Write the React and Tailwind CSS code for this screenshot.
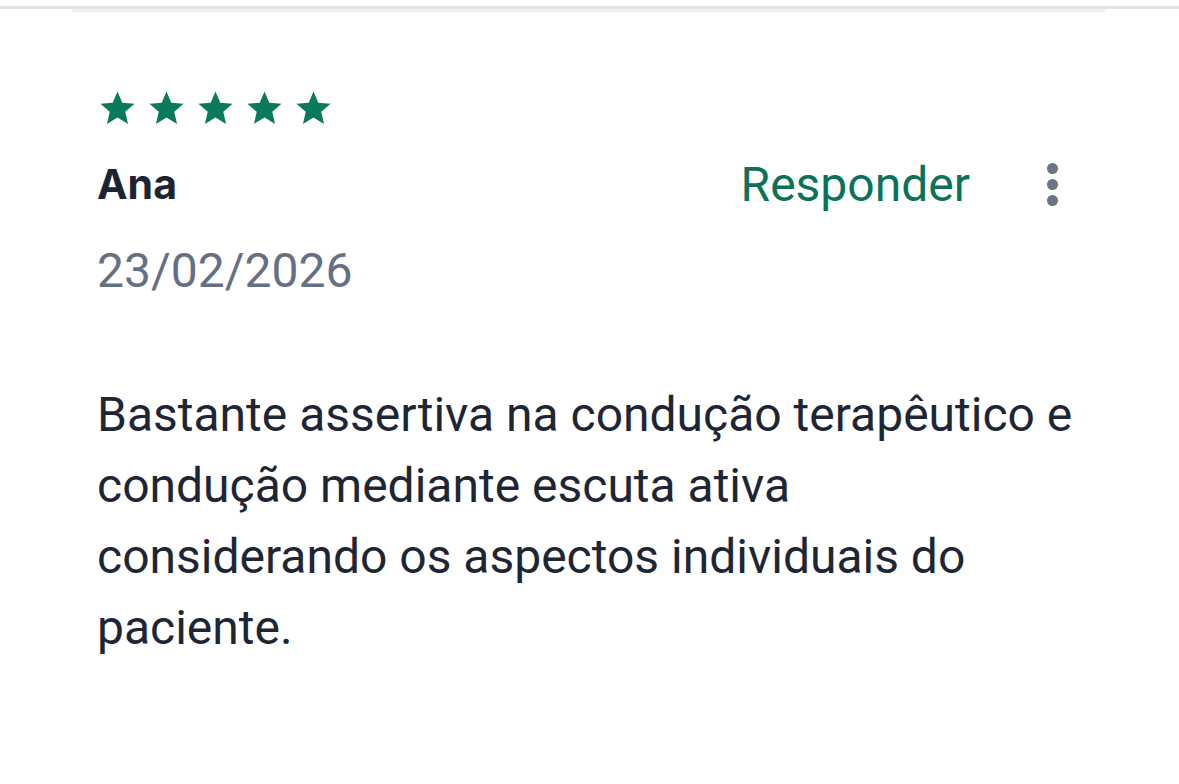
import React from "react";

const Star = () => (
  <svg width="41" height="41" viewBox="0 0 24 24" fill="#0b7a5c">
    <path d="M12 17.27L18.18 21l-1.64-7.03L22 9.24l-7.19-.61L12 2 9.19 8.63 2 9.24l5.46 4.73L5.82 21z" />
  </svg>
);

export default function App() {
  return (
    <div className="w-[1179px] h-[784px] bg-white overflow-hidden" style={{ fontFamily: "Roboto, sans-serif" }}>
      <div className="mt-[6px] h-[3px] bg-[#e3e3e9]" />
      <div className="ml-[72px] mr-[74px] h-[3px] bg-[#efeff3]" />
      <div className="pl-[97px] pr-[115px]">
        <div className="mt-[76px] flex gap-[8px]">
          <Star />
          <Star />
          <Star />
          <Star />
          <Star />
        </div>
        <div className="mt-[30px] flex items-center h-[50px]">
          <div className="flex-1 text-[41px] leading-[50px] font-bold text-[#1c2433]" style={{ fontFamily: "Inter, sans-serif" }}>
            Ana
          </div>
          <div className="text-[48px] leading-[56px] text-[#0b7257] mt-[2px]">Responder</div>
          <div className="ml-[70px] w-[24px] flex flex-col items-center gap-[5px]">
            <span className="block w-[11px] h-[11px] rounded-full bg-[#6b7385]" />
            <span className="block w-[11px] h-[11px] rounded-full bg-[#6b7385]" />
            <span className="block w-[11px] h-[11px] rounded-full bg-[#6b7385]" />
          </div>
        </div>
        <div className="mt-[34px] text-[48px] leading-[56px] text-[#667085]">23/02/2026</div>
        <div className="mt-[80px] text-[48px] leading-[71px] text-[#1e2635] w-[1000px]">
          Bastante assertiva na condução terapêutico e
          <br />
          condução mediante escuta ativa
          <br />
          considerando os aspectos individuais do
          <br />
          paciente.
        </div>
      </div>
    </div>
  );
}
